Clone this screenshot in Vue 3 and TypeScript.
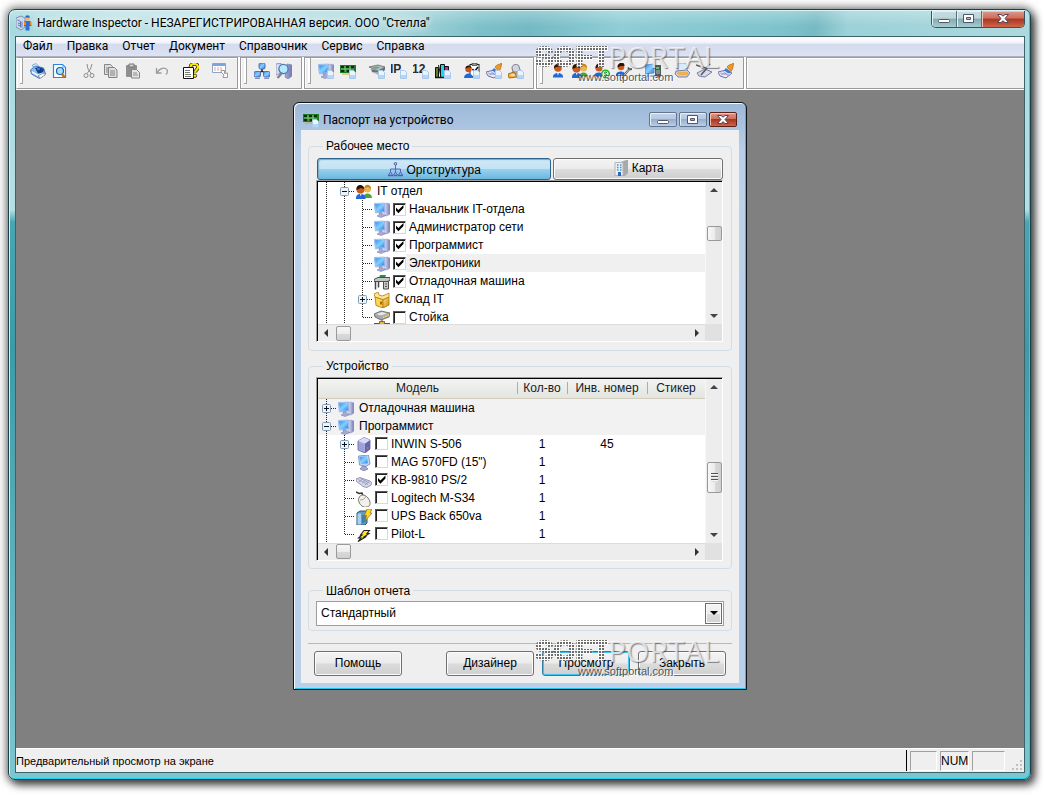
<script setup lang="ts">
import { ref } from 'vue'

interface Tool { icon: string; title: string; page?: boolean }
interface TreeRow { guides: string[]; icon: string; text: string; check?: boolean; hot?: boolean }
interface DeviceRow extends TreeRow { count?: string; inv?: string; group?: boolean }

const menus: string[] = ['Файл', 'Правка', 'Отчет', 'Документ', 'Справочник', 'Сервис', 'Справка']

const bands: Tool[][][] = [
  [
    [{ icon: 'printer', title: 'Печать' }, { icon: 'preview', title: 'Просмотр' }],
    [{ icon: 'cut', title: 'Вырезать' }, { icon: 'copy', title: 'Копировать' }, { icon: 'paste', title: 'Вставить' }],
    [{ icon: 'undo', title: 'Отменить' }],
    [{ icon: 'help', title: 'Помощь' }],
    [{ icon: 'export', title: 'Экспорт' }],
  ],
  [[{ icon: 'network', title: 'Сеть' }, { icon: 'search', title: 'Поиск' }]],
  [
    [{ icon: 'pc', title: 'Рабочее место', page: true }, { icon: 'board', title: 'Паспорт', page: true }],
    [
      { icon: 'drive', title: 'Устройства', page: true },
      { icon: 'ip', title: 'IP-адреса', page: true },
      { icon: 'twelve', title: 'Номера', page: true },
      { icon: 'books', title: 'Каталог', page: true },
    ],
    [
      { icon: 'task', title: 'Заявки', page: true },
      { icon: 'brush', title: 'Обслуживание', page: true },
      { icon: 'supply', title: 'Расходные материалы', page: true },
    ],
  ],
  [
    [
      { icon: 'user', title: 'Сотрудник' },
      { icon: 'users', title: 'Сотрудники' },
      { icon: 'useradd', title: 'Контрагент' },
      { icon: 'userfix', title: 'Ремонт' },
    ],
    [{ icon: 'server', title: 'Компьютер' }],
    [{ icon: 'parcel', title: 'Поставка' }, { icon: 'pen', title: 'Запись' }, { icon: 'brush', title: 'Уборка' }],
  ],
]

const places = ref<TreeRow[]>([
  { guides: ['v', 'minus'], icon: 'users', text: 'IT отдел' },
  { guides: ['v', 'v', 'tee'], icon: 'pc', text: 'Начальник IT-отдела', check: true },
  { guides: ['v', 'v', 'tee'], icon: 'pc', text: 'Администратор сети', check: true },
  { guides: ['v', 'v', 'tee'], icon: 'pc', text: 'Программист', check: true },
  { guides: ['v', 'v', 'tee'], icon: 'pc', text: 'Электроники', check: true, hot: true },
  { guides: ['v', 'v', 'tee'], icon: 'desk', text: 'Отладочная машина', check: true },
  { guides: ['v', 'v', 'plus'], icon: 'box', text: 'Склад IT' },
  { guides: ['v', 'v', 'elbow'], icon: 'rack', text: 'Стойка', check: false },
])

const devices = ref<DeviceRow[]>([
  { guides: ['plus'], icon: 'pc', text: 'Отладочная машина', group: true },
  { guides: ['minus'], icon: 'pc', text: 'Программист', group: true },
  { guides: ['v', 'plus'], icon: 'case', text: 'INWIN S-506', check: false, count: '1', inv: '45' },
  { guides: ['v', 'tee'], icon: 'monitor', text: 'MAG 570FD (15")', check: false, count: '1' },
  { guides: ['v', 'tee'], icon: 'keyboard', text: 'KB-9810 PS/2', check: true, count: '1' },
  { guides: ['v', 'tee'], icon: 'mouse', text: 'Logitech M-S34', check: false, count: '1' },
  { guides: ['v', 'tee'], icon: 'ups', text: 'UPS Back 650va', check: false, count: '1' },
  { guides: ['v', 'elbow'], icon: 'bolt', text: 'Pilot-L', check: false, count: '1' },
])

const template = ref('Стандартный')
const tab = ref('org')
</script>

<template>
  <svg class="sprite" aria-hidden="true">
    <defs>
      <linearGradient id="gBlue" x1="0" y1="0" x2="1" y2="1"><stop offset="0" stop-color="#2f8cf2" /><stop offset=".5" stop-color="#86d0ff" /><stop offset="1" stop-color="#2478e8" /></linearGradient>
      <linearGradient id="gCase" x1="0" y1="0" x2="1" y2="0"><stop offset="0" stop-color="#e8eaf8" /><stop offset="1" stop-color="#7478b4" /></linearGradient>
      <linearGradient id="gGold" x1="0" y1="0" x2="1" y2="1"><stop offset="0" stop-color="#ffe27a" /><stop offset="1" stop-color="#c88a10" /></linearGradient>
      <symbol id="page" viewBox="0 0 16 16"><path d="M9.500 7.500h4l2 2v6h-6z" fill="#eaf4ff" stroke="#a8c8ec" /><path d="M10 12h5v3h-5z" fill="#b5d6f8" /></symbol>
      <symbol id="inspector" viewBox="0 0 16 16">
        <path d="M0 3l5-2 4 2v9l-4 3-5-3z" fill="#cfd8ea" stroke="#7f8fb5" /><path d="M1.500 5l3 1.500v6M6 6.500v6M2 8l2.500 1M2 10l2.500 1" stroke="#5d77b5" fill="none" />
        <circle cx="11.500" cy="3.500" r="2.200" fill="#e8b27c" /><path d="M9 2.500h5L13 .5h-3z" fill="#2b63c0" /><path d="M8.500 6h6l1 5h-2v4.500h-4V11h-1.500z" fill="#2e6fd6" /><path d="M8 7h2v3H8zM14 7h1.500v3H14z" fill="#f08a1c" />
      </symbol>
      <symbol id="printer" viewBox="0 0 16 16">
        <path d="M2 2.500l4-2 3 3-3 2z" fill="#eaf5ff" stroke="#6fa6dc" /><path d="M.5 7l5-4 8 2 2 6-6 4.500L1.500 11z" fill="#8dbcf0" stroke="#4577b4" /><path d="M5 5l4-1 5 2-1 4-5 .5z" fill="#123c8c" /><path d="M7 6l3 0" stroke="#5fb8ff" /><path d="M2 9l6 3.500 5-2.500" stroke="#f4f9ff" fill="none" stroke-width="1.500" /><path d="M8 13l5-3 2.500 1.500-5 3.500z" fill="#fff" stroke="#8a95a4" />
      </symbol>
      <symbol id="preview" viewBox="0 0 16 16">
        <path d="M1.500 1.500h9l3 3v10h-12z" fill="#fff" stroke="#2d83df" stroke-width="1.200" /><path d="M10 2v3h3z" fill="#9cccff" /><circle cx="8" cy="8" r="3.500" fill="#a5e2f8" stroke="#1a63ae" stroke-width="1.200" /><path d="M10 11l2.500 3.500" stroke="#b97622" stroke-width="2.400" />
      </symbol>
      <symbol id="cut" viewBox="0 0 16 16" fill="none" stroke="#8c8c8c"><path d="M6 1l1 5 3.500 5M11 1L9.500 6 6 10.500" /><circle cx="5" cy="12.500" r="2" /><circle cx="11" cy="12.500" r="2" /></symbol>
      <symbol id="copy" viewBox="0 0 16 16" fill="#dedede" stroke="#858585"><path d="M1.500 1.500h6l2 2v8h-8z" /><path d="M3 5h5M3 7h5M3 9h5" /><path d="M5.500 4.500h6l2.500 2.500v7.500H5.500z" /><path d="M7 8h5M7 10h5M7 12h5" /></symbol>
      <symbol id="paste" viewBox="0 0 16 16"><rect x="1" y="2" width="11" height="12" rx="1" fill="#8f8f8f" /><path d="M4 1h5v3H4z" fill="#d0d0d0" stroke="#777" /><path d="M6.500 6.500h5l3 3v5.500h-8z" fill="#e6e6e6" stroke="#858585" /><path d="M8 10h4M8 12h5" stroke="#8c8c8c" /></symbol>
      <symbol id="undo" viewBox="0 0 16 16"><path d="M2.500 5v5h5M3 9.500C5 6 9 4.500 11.500 5.500S14 9.500 12 11.500" fill="none" stroke="#999" stroke-width="1.300" /></symbol>
      <symbol id="help" viewBox="0 0 16 16"><path d="M.5 4.500h10v11H.5z" fill="#fff" stroke="#111" /><path d="M2 7.500h5M2 9.500h5M2 11.500h6M2 13.500h6" stroke="#555" stroke-width=".8" /><path d="M7.500 4c0-4 7.500-4 7.500 0 0 3-3 3-3 5.500" fill="none" stroke="#111" stroke-width="3.600" /><path d="M7.500 4c0-4 7.500-4 7.500 0 0 3-3 3-3 5.500" fill="none" stroke="#ffe800" stroke-width="2.200" /><circle cx="12" cy="12.800" r="1.700" fill="#ffe800" stroke="#111" stroke-width=".7" /></symbol>
      <symbol id="export" viewBox="0 0 16 16"><path d="M.5 .5h13v9H.5z" fill="#fff" stroke="#8fa4c8" /><path d="M1 1h12v2H1z" fill="#7ba4e0" /><path d="M2 5h2m1 0h2m1 0h2M2 7h2m1 0h2m1 0h2" stroke="#e0a19c" /><path d="M9.500 7.500h3v3l3-.5v4.500H11l1-2.500-3-3z" fill="#fff" stroke="#9a9a9a" /></symbol>
      <symbol id="network" viewBox="0 0 16 16"><path d="M8 5v3M8 8l-4 3M8 8l4 3" stroke="#223" stroke-width="1.500" /><rect x="5" y="0" width="6" height="6" rx="1.500" fill="url(#gBlue)" stroke="#5a6da8" /><rect x="0" y="8.500" width="6.500" height="5.500" rx="1.500" fill="url(#gBlue)" stroke="#5a6da8" /><rect x="9.500" y="8.500" width="6.500" height="5.500" rx="1.500" fill="url(#gBlue)" stroke="#5a6da8" /><path d="M1 15.500h5M10 15.500h5" stroke="#8b90b6" /></symbol>
      <symbol id="search" viewBox="0 0 16 16"><path d="M0 1l5-1v10l-5 2zM11 1l5 1v11l-4 3-3-2z" fill="url(#gCase)" stroke="#7f88b0" stroke-width=".8" /><circle cx="7.500" cy="6" r="4.600" fill="#b5e8fd" stroke="#4a7ab8" stroke-width="1.300" /><path d="M5.500 10.500L1.500 15" stroke="#86808e" stroke-width="2.400" /></symbol>
      <symbol id="pc" viewBox="0 0 16 16"><path d="M10 2l3-1 3 1v10l-3 2-3-1z" fill="url(#gCase)" stroke="#9a9dcb" stroke-width=".6" /><path d="M0 1.500L10.500 1l.5 9L1.500 11z" fill="#b4d4f8" stroke="#7fa6de" stroke-width=".6" /><path d="M1 2.300l9-.5.3 7.500L2 10.200z" fill="url(#gBlue)" /><path d="M5 11l3-.4.500 1.900L12 13.500l-5 2-4-1.500 2.500-1.300z" fill="#a7abd4" stroke="#7d80b0" stroke-width=".6" /></symbol>
      <symbol id="board" viewBox="0 0 16 16"><path d="M0 2h16v8H0z" fill="#1d7a28" /><path d="M1 3h3v2H1zM6 3h3v2H6zM11 3h3v3h-3zM1 7h4v2H1zM7 7h3v2H7z" fill="#0b2c10" /><path d="M1 6h13M5 3v6M10 3v6" stroke="#93e07f" stroke-width=".8" /><path d="M2 11h8" stroke="#d0a63c" /></symbol>
      <symbol id="drive" viewBox="0 0 16 16"><path d="M0 4l9-2 7 2-7 4z" fill="#b9bcc6" stroke="#62656f" stroke-width=".8" /><path d="M2 6l7 2 7-4v3l-6 5-7-3z" fill="#6c6f7c" /><path d="M3 4.500l5-1 3 1-4 1.500z" fill="#5fae56" /><path d="M4 10h5" stroke="#e1e2ea" /></symbol>
      <symbol id="ip" viewBox="0 0 16 16"><text x="-1" y="10" font-family="Liberation Sans, sans-serif" font-size="12" font-weight="700" fill="#2b2b2b">IP</text></symbol>
      <symbol id="twelve" viewBox="0 0 16 16"><text x="-1" y="10" font-family="Liberation Sans, sans-serif" font-size="12" font-weight="700" fill="#2b2b2b">12</text></symbol>
      <symbol id="books" viewBox="0 0 16 16"><path d="M.5 4.500h3v10h-3zM3.500 2l2.500 12" fill="#5d7c3c" stroke="#111" /><path d="M5.500 1.500h4v13h-4z" fill="#18d8ec" stroke="#111" /><path d="M9.500 3.500h4v11h-4z" fill="#d021b6" stroke="#111" /><path d="M0 14.500h15" stroke="#111" stroke-width="1.500" /></symbol>
      <symbol id="task" viewBox="0 0 16 16"><rect x="6" y="1.500" width="9" height="12" fill="#fff" stroke="#222" /><path d="M8 0h5v2.500H8z" fill="#999" stroke="#222" stroke-width=".6" /><path d="M8.500 6l2 2.500L14 4" stroke="#111" fill="none" stroke-width="1.500" /><circle cx="4.500" cy="6" r="3.200" fill="#c4571f" /><path d="M1.500 5.500c0-4 6-4 6 0L5.500 4z" fill="#2a1408" /><path d="M0 15c0-6 9-6 9 0z" fill="#2368d8" /></symbol>
      <symbol id="brush" viewBox="0 0 16 16"><path d="M0 9l8-2 6 3-6 5-6-2z" fill="#e8e8fa" stroke="#6e72b0" /><path d="M2 10l9 2M3 12l8-3M5 8.500l5 4" stroke="#8a8fc8" stroke-width=".7" /><path d="M8 5l5 4-2 1.500-5-3z" fill="#3d78c8" /><path d="M9 4c2-3 4-2 7-4-1 3-1 6-3 8.500z" fill="#f09a26" stroke="#b46410" stroke-width=".7" /></symbol>
      <symbol id="supply" viewBox="0 0 16 16"><path d="M4 5c0-5 8-4 7-1l2 5H5z" fill="#d4d6de" stroke="#777a88" /><path d="M4 9h9l2 3H2z" fill="#9ca0b2" /><path d="M0 11l6-2 3 5-8 1z" fill="#f2b14a" stroke="#a66d1a" /><path d="M3 12h4" stroke="#fff" /></symbol>
      <symbol id="user" viewBox="0 0 16 16"><circle cx="8" cy="5" r="3.800" fill="#c95a20" /><path d="M4 5.500C3 0 12-1 12 4L9 3.500 6 4z" fill="#2a1408" /><path d="M3 14.500c-1-6 11-6 10 0z" fill="#2368d8" /><path d="M7 9.500h2l-1 3z" fill="#fff" /></symbol>
      <symbol id="users" viewBox="0 0 16 16"><circle cx="11.500" cy="5" r="3.500" fill="#eeb352" /><path d="M8.500 4c0-5 7-4 6.500 1L12 3z" fill="#c58414" /><path d="M7 14c0-6 9-6 9 0z" fill="#48a63a" /><circle cx="4.500" cy="5.500" r="4" fill="#c95a20" /><path d="M.5 6C-.5-.5 8-.5 8 5L5 4z" fill="#2a1408" /><path d="M0 15c-1-7 10-7 9.500 0z" fill="#2368d8" /><path d="M4 10h1.500l-.7 2.500z" fill="#fff" /></symbol>
      <symbol id="useradd" viewBox="0 0 16 16"><circle cx="5" cy="5" r="3.500" fill="#c95a20" /><path d="M1.500 5.500C1-1 9-1 8.500 4L5 3.500z" fill="#2a1408" /><path d="M0 14c-1-6 10-6 9.500 0z" fill="#2368d8" /><circle cx="11.500" cy="11" r="3.800" fill="#dff5dc" stroke="#19b52b" stroke-width="1.500" /><path d="M13 9.500c-3-1.500-3 1.500-1.500 1.500s2 3-1.500 1.500" stroke="#0c7a18" fill="none" /></symbol>
      <symbol id="userfix" viewBox="0 0 16 16"><circle cx="5" cy="4" r="3.300" fill="#c95a20" /><path d="M1.500 4.500C1-1 9-2 8.500 3L5 3z" fill="#2a1408" /><path d="M0 13c-1-6 10-6 9.500 0z" fill="#2368d8" /><path d="M6 14.500l7-8M12 4.500l1.500 2 2.500-.5M4.500 13l2 .5.5 2" stroke="#555" stroke-width="2" fill="none" /><path d="M6.500 14l6.500-7.500" stroke="#f0f0f0" stroke-width=".8" /></symbol>
      <symbol id="server" viewBox="0 0 16 16"><path d="M0 2l9-1v9l-9 1z" fill="url(#gBlue)" stroke="#5f86c4" stroke-width=".8" /><path d="M2 12h7v2H1z" fill="#a9b4d4" /><path d="M10 2h6v13h-6z" fill="#50575e" /><path d="M11 4h3v2h-3z" fill="#58d060" /><path d="M11 8h4M11 10h4" stroke="#b8bcc4" /></symbol>
      <symbol id="parcel" viewBox="0 0 16 16"><path d="M4 0h7l2 3v6H4z" fill="#d8ecff" stroke="#8aabd2" /><path d="M2 8l11-1 3 3-3 4H4L1 11z" fill="#c9ccda" stroke="#80849c" /><path d="M3 9h11v3H4z" fill="#efb052" /></symbol>
      <symbol id="pen" viewBox="0 0 16 16"><path d="M1 10l8-4 7 3-7 5-6-1z" fill="#d9d9ec" stroke="#777aa6" /><path d="M0 2l6 2 4 1 4-4M5 12l7-8" stroke="#58595e" stroke-width="1.500" fill="none" /></symbol>
      <symbol id="orgchart" viewBox="0 0 16 16" fill="none" stroke="#565ab0"><path d="M7.500 3v4M2.500 10.500V7h10v3.500M7.500 7v3M.5 13l2-3 2 3M5.500 13l2-3 2 3M10.500 13l2-3 2 3" stroke-width=".9" /><circle cx="7.500" cy="1.800" r="1.300" fill="#b9bdf4" /><path d="M0 13.500h5M5.500 13.500h4M10 13.500h5" stroke-width="1.600" /></symbol>
      <symbol id="building" viewBox="0 0 16 16"><path d="M8 2l5-2h2v13l-3 3H8z" fill="#a9a9a9" /><path d="M2 2.500h8v13H2z" fill="#eee" stroke="#b5b5b5" /><path d="M4 5h1.500M7 5h1.500M4 7.500h1.500M7 7.500h1.500M4 10h1.500M7 10h1.500" stroke="#2d9af0" stroke-width="1.500" /><path d="M5 12h3v4H5z" fill="#2a6ab8" /></symbol>
      <symbol id="desk" viewBox="0 0 16 16"><path d="M6 1h6l-1 3H5z" fill="#2b8f3c" /><path d="M0 5.500l4-2h12v3l-3 1H0z" fill="#c6c6c6" stroke="#4d4d4d" /><path d="M1.500 7.500v8M4.500 7.500v6" stroke="#444" stroke-width="1.500" /><path d="M9.500 7.500h5v7.500h-5z" fill="#c9c9c9" stroke="#4d4d4d" /><path d="M11 10h2M11 12.500h2" stroke="#555" /></symbol>
      <symbol id="box" viewBox="0 0 16 16"><path d="M1 5l8 2.500V16l-7-2.500z" fill="#ffd34d" stroke="#a9730e" stroke-width=".8" /><path d="M9 7.500L15 5v8L9 16z" fill="url(#gGold)" stroke="#a9730e" stroke-width=".8" /><path d="M1 5L0 2 4 0l1 3 3 1 3-1 4-2v4L9 7.500z" fill="#ffe592" stroke="#b07c14" stroke-width=".8" /><path d="M7 9.500v3" stroke="#7a4a00" stroke-width="1.500" /></symbol>
      <symbol id="rack" viewBox="0 0 16 16"><path d="M0 4l7-3 9 2-1 4-8 3-6-3z" fill="#a5a8ac" stroke="#5c5f62" stroke-width=".8" /><path d="M2 4l6-2 5 1.500-6 2z" fill="#e6e7e9" /><path d="M9 7.500L15 5" stroke="#ffe02a" stroke-width="1.500" stroke-dasharray="1.500 1" /><path d="M8 10v3M0 13.500h16" stroke="#555" /><path d="M5.500 11.500h5v4h-5z" fill="#f2b12e" stroke="#8d6410" /></symbol>
      <symbol id="case" viewBox="0 0 16 16"><path d="M2 4l6-3.500L14 3v9l-5 4-7-3z" fill="#a6a9dc" stroke="#5a5d98" stroke-width=".8" /><path d="M9 6.500L14 3v9l-5 4z" fill="#6467a8" /><path d="M2 4l7 2.500L14 3 8 .5z" fill="#d9dbf8" /><path d="M3.500 7l4 1.500M3.500 9l4 1.500M3.500 11l4 1.500" stroke="#8c90c8" stroke-width=".7" /><circle cx="11.500" cy="11" r="1" fill="#f06060" /></symbol>
      <symbol id="monitor" viewBox="0 0 16 16"><path d="M2.500 1l10-1 1.500 9-4 2.500L3.500 10z" fill="#b9d6f4" stroke="#6c8dbd" stroke-width=".8" /><path d="M3.500 2l7.500-.7.8 7-7 .7z" fill="url(#gBlue)" /><path d="M6.500 11l3 .5 2.500 2.500-4 2-4-2z" fill="#a4a7cf" stroke="#6b6ea0" stroke-width=".6" /></symbol>
      <symbol id="keyboard" viewBox="0 0 16 16"><path d="M0 6l4-1.500L14 8l2 2-1 2-4 2.500-4-1L0 8z" fill="#d6d8ec" stroke="#7f82a9" stroke-width=".8" /><path d="M2 6.500l10 5M4.500 5.500l9 4.500M3 9l3.500-3M6 10.500l3.500-3M9 12l4-3.500" stroke="#8b8eb8" stroke-width=".7" /></symbol>
      <symbol id="mouse" viewBox="0 0 16 16"><path d="M0 1l3 1.500L6 2l1 3" stroke="#333" fill="none" stroke-width="1.500" /><path d="M3 7c1-4 6-4 9 0s3 8-1 9-7-2-8-5-.5-3 0-4z" fill="#f1f0ea" stroke="#77736c" /><path d="M4 9c3 0 5-1 6-4" stroke="#aaa59c" fill="none" /></symbol>
      <symbol id="ups" viewBox="0 0 16 16"><path d="M1 4l3-2h7v12l-2 2H1z" fill="#5f9ac4" stroke="#26587c" /><path d="M1.500 4.500H5v11H1.500z" fill="#a8d2ec" /><path d="M7 6v8M9 6v7" stroke="#2e6288" /><path d="M11 0h5l-2 4h2l-7 8 1.500-5.500H8.500z" fill="#ffd91a" stroke="#a5740a" stroke-width=".8" /></symbol>
      <symbol id="bolt" viewBox="0 0 16 16"><path d="M8 3.500h5.500l-2.500 3h2L8 10h1.500L2 14.500 5 11H2.500L6 8H4.500z" fill="#ffe81c" stroke="#222" stroke-width="1.100" /></symbol>
      <symbol id="g-v" viewBox="0 0 18 18"><path d="M8.500 0v18" stroke="#222" stroke-dasharray="1 1" /></symbol>
      <symbol id="g-tee" viewBox="0 0 18 18" fill="none" stroke="#222" stroke-dasharray="1 1"><path d="M8.500 0v18M9 9.500h9" /></symbol>
      <symbol id="g-elbow" viewBox="0 0 18 18" fill="none" stroke="#222" stroke-dasharray="1 1"><path d="M8.500 0v10M9 9.500h9" /></symbol>
      <symbol id="g-minus" viewBox="0 0 18 18"><path d="M8.500 0v18M13 9.500h5" stroke="#222" stroke-dasharray="1 1" /><rect x="4.500" y="5.500" width="8" height="8" rx="1" fill="#eef3fa" stroke="#7f9db9" /><path d="M6 9.500h5" stroke="#111" /></symbol>
      <symbol id="g-plus" viewBox="0 0 18 18"><path d="M8.500 0v18M13 9.500h5" stroke="#222" stroke-dasharray="1 1" /><rect x="4.500" y="5.500" width="8" height="8" rx="1" fill="#eef3fa" stroke="#7f9db9" /><path d="M6 9.500h5M8.500 7v5" stroke="#111" /></symbol>
      <symbol id="c-min" viewBox="0 0 16 12"><rect x="2.500" y="6.500" width="11" height="3" rx="1" fill="#fff" stroke="#51566b" /></symbol>
      <symbol id="c-max" viewBox="0 0 16 12"><path d="M2.500 1.500h10v8h-10zM5.500 4.500h4v2h-4z" fill="#fff" fill-rule="evenodd" stroke="#51566b" /></symbol>
      <symbol id="c-close" viewBox="0 0 16 12"><path d="M2.500 1.500H6L8 3.200l2-1.700h3.500L10 5.500l3.500 4H10L8 7.800 6 9.500H2.500l3.500-4z" fill="#fff" stroke="#51465b" /></symbol>
    </defs>
  </svg>

  <div class="screen">
    <div class="window">
      <header class="titlebar">
        <svg class="icon"><use href="#inspector" /></svg>
        <h1 class="title">Hardware Inspector - НЕЗАРЕГИСТРИРОВАННАЯ версия. ООО "Стелла"</h1>
        <div class="caption">
          <button type="button" class="cap" aria-label="Свернуть"><svg><use href="#c-min" /></svg></button>
          <button type="button" class="cap" aria-label="Развернуть"><svg><use href="#c-max" /></svg></button>
          <button type="button" class="cap close" aria-label="Закрыть окно"><svg><use href="#c-close" /></svg></button>
        </div>
      </header>

      <div class="client">
        <nav class="menu">
          <button v-for="m in menus" :key="m" type="button" class="menuitem">{{ m }}</button>
        </nav>
        <div class="toolbars">
          <div v-for="(band, bi) in bands" :key="bi" class="band">
            <span class="grip"></span>
            <div v-for="(group, gi) in band" :key="gi" class="toolgroup">
              <button v-for="t in group" :key="t.icon" type="button" class="tool" :aria-label="t.title">
                <svg class="icon"><use :href="'#' + t.icon" /><use v-if="t.page" href="#page" /></svg>
              </button>
            </div>
          </div>
          <div class="band rest"></div>
          <div class="watermark top" aria-hidden="true">
            <div class="brand"><span class="dots">SOFT</span><span class="portal">PORTAL</span></div>
            <div class="url">www.softportal.com</div>
          </div>
        </div>

        <main class="desktop">
          <section class="dialog" aria-labelledby="dlg">
            <header class="dlgbar">
              <svg class="icon"><use href="#board" /><use href="#page" /></svg>
              <h2 id="dlg" class="title">Паспорт на устройство</h2>
              <div class="dlgcaption">
                <button type="button" class="cap" aria-label="Свернуть"><svg><use href="#c-min" /></svg></button>
                <button type="button" class="cap" aria-label="Развернуть"><svg><use href="#c-max" /></svg></button>
                <button type="button" class="cap close" aria-label="Закрыть окно"><svg><use href="#c-close" /></svg></button>
              </div>
            </header>

            <form class="body" @submit.prevent>
              <fieldset class="group">
                <legend>Рабочее место</legend>
                <div class="tabs">
                  <button type="button" class="tab" :class="{ on: tab === 'org' }" @click="tab = 'org'"><svg class="icon"><use href="#orgchart" /></svg>Оргструктура</button>
                  <button type="button" class="tab" :class="{ on: tab === 'map' }" @click="tab = 'map'"><svg class="icon"><use href="#building" /></svg>Карта</button>
                </div>
                <div class="listbox">
                  <ul class="tree">
                    <li v-for="r in places" :key="r.text" class="row">
                      <svg v-for="(g, i) in r.guides" :key="i" class="guide"><use :href="'#g-' + g" /></svg>
                      <svg class="icon node"><use :href="'#' + r.icon" /></svg>
                      <label v-if="r.check !== undefined" class="item" :class="{ hot: r.hot }"><input v-model="r.check" type="checkbox" class="check" /><span class="txt">{{ r.text }}</span></label>
                      <span v-else class="item plain">{{ r.text }}</span>
                    </li>
                  </ul>
                  <div class="vbar"><i class="up"></i><i class="thumb high"></i><i class="down"></i></div>
                  <div class="hbar"><i class="left"></i><i class="thumb"></i><i class="right"></i></div>
                  <div class="corner"></div>
                </div>
              </fieldset>

              <fieldset class="group second">
                <legend>Устройство</legend>
                <div class="listbox">
                  <table class="grid">
                    <colgroup><col /><col class="c-count" /><col class="c-inv" /><col class="c-sticker" /></colgroup>
                    <thead><tr><th>Модель</th><th>Кол-во</th><th>Инв. номер</th><th>Стикер</th></tr></thead>
                    <tbody>
                      <tr v-for="d in devices" :key="d.text" :class="{ shaded: d.group }">
                        <td>
                          <div class="row">
                            <svg v-for="(g, i) in d.guides" :key="i" class="guide"><use :href="'#g-' + g" /></svg>
                            <svg class="icon node"><use :href="'#' + d.icon" /></svg>
                            <label v-if="d.check !== undefined" class="item"><input v-model="d.check" type="checkbox" class="check" /><span class="txt">{{ d.text }}</span></label>
                            <span v-else class="item plain">{{ d.text }}</span>
                          </div>
                        </td>
                        <td>{{ d.count }}</td>
                        <td>{{ d.inv }}</td>
                        <td></td>
                      </tr>
                    </tbody>
                  </table>
                  <div class="vbar"><i class="up"></i><i class="thumb low"></i><i class="down"></i></div>
                  <div class="hbar"><i class="left"></i><i class="thumb"></i><i class="right"></i></div>
                  <div class="corner"></div>
                </div>
              </fieldset>

              <fieldset class="group third">
                <legend><label for="tpl">Шаблон отчета</label></legend>
                <div class="combo">
                  <select id="tpl" v-model="template"><option>Стандартный</option></select>
                  <span class="drop"></span>
                </div>
              </fieldset>

              <div class="actions">
                <button type="button" class="btn first">Помощь</button>
                <button type="button" class="btn">Дизайнер</button>
                <button type="submit" class="btn default">Просмотр</button>
                <button type="button" class="btn">Закрыть</button>
                <div class="watermark bottom" aria-hidden="true">
                  <div class="brand"><span class="dots">SOFT</span><span class="portal">PORTAL</span></div>
                  <div class="url">www.softportal.com</div>
                </div>
              </div>
            </form>
          </section>
        </main>

        <footer class="status">
          <span class="hint">Предварительный просмотр на экране</span>
          <span class="panel p1"></span>
          <span class="panel p2">NUM</span>
          <span class="panel p3"></span>
          <svg class="sizer" viewBox="0 0 12 12"><path d="M9 1h2v2H9zM5 5h2v2H5zM9 5h2v2H9zM1 9h2v2H1zM5 9h2v2H5zM9 9h2v2H9z" fill="#c0c0c0" /></svg>
        </footer>
      </div>
    </div>
  </div>
</template>

<style>
body { margin: 0; background: #fff; }
</style>

<style scoped>
* { box-sizing: border-box; }
button, select, input { font: inherit; color: inherit; margin: 0; }
.sprite { position: absolute; width: 0; height: 0; }
.icon { width: 16px; height: 16px; flex: none; display: block; }

.screen {
  display: flex;
  min-height: 100vh;
  padding: 9px 13px 16px 8px;
  overflow: hidden;
  font: 12px/16px "Liberation Sans", Arial, sans-serif;
  color: #000;
  background: #fff;
}
.window {
  flex: 1;
  min-width: 0;
  display: flex;
  flex-direction: column;
  padding: 0 5px 6px 6px;
  border: 1px solid #1d4148;
  border-radius: 7px;
  background: linear-gradient(#a9dbe0 0, #b5dfe3 200px, #4aa5b1 212px, #3d9ba8 340px, #6cbac5 650px, #7cc6cf 100%);
  box-shadow: inset 1px 1px 0 #d8f4f7, inset -1px -1px 0 #19d2f5, 0 0 8px 2px rgba(0, 0, 0, .5), 4px 5px 9px rgba(0, 0, 0, .6);
}
.titlebar {
  display: flex;
  align-items: flex-start;
  height: 25px;
  margin: 1px -4px 0 -5px;
  padding-left: 6px;
  border-radius: 6px 6px 0 0;
  background:
    linear-gradient(rgba(255, 255, 255, .28), rgba(255, 255, 255, 0) 60%),
    linear-gradient(100deg, #a6d9de 0, #bce2e5 12%, #a8d7dc 38%, #7fc1ca 46%, #74bac4 51%, #90cdd6 60%, #7ec3cc 76%, #77bac3 79%, #9bd1d8 82%, #add9de 100%);
}
.titlebar .icon { margin: 4px 5px 0 0; }
.title {
  flex: 1;
  min-width: 0;
  margin: 0;
  font: 12px/26px Roboto, "Noto Sans", sans-serif;
  white-space: nowrap;
}
.titlebar .title { text-shadow: 0 0 8px #fff, 0 0 8px #fff; line-height: 25px; }
.caption {
  display: flex;
  height: 17px;
  margin-right: 4px;
  border: 1px solid #39525b;
  border-top: 0;
  border-radius: 0 0 5px 5px;
  overflow: hidden;
}
.cap {
  display: grid;
  place-items: center;
  width: 25px;
  padding: 0;
  border: 0;
  border-right: 1px solid #55717a;
  background: linear-gradient(#c9dde0 0, #bed4d8 45%, #86aab1 50%, #a3ccd1 100%);
  box-shadow: inset 1px 1px 0 #e4f2f4;
}
.cap svg { width: 16px; height: 12px; }
.caption .close { width: 42px; border-right: 0; }
.cap.close { background: linear-gradient(#dd9a8c 0, #cd6d59 45%, #ab3520 50%, #cf6647 100%); box-shadow: inset 1px 1px 0 #f0c4ba; }

.client {
  flex: 1;
  display: flex;
  flex-direction: column;
  border: 1px solid #3b636b;
  background: #efefef;
}
.menu {
  display: flex;
  height: 20px;
  border-bottom: 1px solid #aeb2bd;
  background: linear-gradient(#fff 0, #f0f3fa 30%, #d4dbed 40%, #dde3f3 100%);
}
.menuitem {
  padding: 0 7px;
  border: 0;
  background: none;
  font: 12px/19px Roboto, "Noto Sans", sans-serif;
}
.toolbars { position: relative; display: flex; gap: 2px; height: 33px; padding-bottom: 1px; background: #fff; }
.band {
  display: flex;
  align-items: center;
  gap: 7px;
  padding: 0 6px 4px 3px;
  border: 1px solid #9a9a9a;
  background: #efefef;
  box-shadow: inset 1px 1px 0 #fff;
}
.band:first-child { border-left-color: #efefef; }
.rest { flex: 1; border-right: 0; }
.grip { width: 3px; height: 26px; margin-right: -3px; border: solid #a0a0a0; border-width: 0 1px 1px 0; background: #fff; }
.toolgroup { display: flex; }
.tool { display: grid; place-items: center; width: 22px; height: 22px; padding: 0; border: 0; background: none; }

.desktop { position: relative; flex: 1; min-height: 600px; background: #808080; }
.dialog {
  position: absolute;
  left: 277px;
  top: 12px;
  width: 454px;
  padding: 0 7px 6px;
  border: 1px solid #101418;
  border-radius: 6px 6px 0 0;
  background: linear-gradient(#9db9d8 0, #b9cfe9 50px, #bcd2eb 100px, #b9d0ea 220px, #b9d0ea 100%);
  box-shadow: inset 1px 1px 0 #f4f9ff, inset -1px -1px 0 #1fc4ea;
}
.dlgbar { display: flex; align-items: center; height: 27px; padding: 6px 0 0 2px; }
.dlgbar .title { line-height: 20px; margin-left: 4px; }
.dlgcaption { display: flex; gap: 2px; margin-right: 2px; }
.dlgcaption .cap { width: 28px; height: 15px; border: 1px solid #66758f; border-radius: 2px; background: linear-gradient(#c4d4e8 0, #b6c9e1 45%, #96afd0 50%, #b8cee8 100%); }
.dlgcaption .cap.close { border-color: #5c2018; background: linear-gradient(#dd9a8c 0, #cd6d59 45%, #ab3520 50%, #cf6647 100%); }
.body { padding: 8px 7px 7px; background: #efefef; }

.group {
  min-width: 0;
  margin: 0;
  padding: 4px 8px 8px 7px;
  border: 1px solid #d3dde6;
  border-radius: 4px;
}
.group legend { margin-left: 7px; padding: 0 3px; line-height: 16px; }
.second { margin-top: 7px; padding-top: 3px; padding-bottom: 7px; }
.third { margin-top: 14px; padding: 2px 7px 4px; }

.tabs { display: grid; grid-template-columns: 235fr 170fr; gap: 2px; margin-left: 1px; }
.tab {
  display: flex;
  align-items: center;
  justify-content: center;
  gap: 3px;
  height: 22px;
  padding: 0 0 2px;
  border: 1px solid #707070;
  border-radius: 3px;
  background: linear-gradient(#f3f3f3 0, #ebebeb 50%, #dcdcdc 52%, #cfcfcf 100%);
  box-shadow: inset 0 0 0 1px #fbfbfb;
}
.tab.on {
  padding: 2px 0 0;
  border-color: #2c628b;
  background: linear-gradient(#cfe8f7 0, #c3e3f5 48%, #98d1ef 52%, #6db6dd 100%);
  box-shadow: inset 1px 1px 1px #7fa9c4;
}

.listbox {
  display: grid;
  grid-template-columns: minmax(0, 1fr) 17px;
  grid-template-rows: auto 17px;
  border: solid;
  border-width: 1px;
  border-color: #a0a0a0 #fff #fff #a0a0a0;
  background: #fff;
  box-shadow: inset 1px 1px 0 #000;
  padding: 1px 0 0 1px;
}
.tree { height: 142px; margin: 0; padding: 0; list-style: none; overflow: hidden; }
.row { display: flex; height: 18px; }
.guide { width: 18px; height: 18px; flex: none; }
.node { margin: 2px 0 0 2px; }
.item { display: flex; align-items: center; flex: 1; white-space: nowrap; line-height: 18px; }
.plain { padding-left: 5px; }
.txt { flex: 1; padding-left: 3px; }
.hot .txt { background: #f0f0f0; }
.check {
  appearance: none;
  width: 13px;
  height: 13px;
  margin-left: 3px;
  flex: none;
  border: 1px solid;
  border-color: #555 #d8d8d8 #d8d8d8 #555;
  background: #fff;
  box-shadow: inset 1px 1px 0 #222;
}
.check:checked::before {
  content: "";
  display: block;
  width: 11px;
  height: 11px;
  background: #000;
  clip-path: polygon(18% 36%, 40% 58%, 86% 14%, 86% 42%, 40% 88%, 18% 64%);
}

.grid { width: 100%; table-layout: fixed; border-collapse: collapse; }
.c-count { width: 50px; }
.c-inv { width: 80px; }
.c-sticker { width: 58px; }
.grid th {
  height: 19px;
  padding: 0;
  font-weight: 400;
  color: #14212b;
  border-bottom: 1px solid #d3cdbd;
  background: linear-gradient(90deg, #a9adae, #a9adae) left center / 1px 12px no-repeat, linear-gradient(#f3f4f1, #e3e5e0);
}
.grid th:first-child { background: linear-gradient(#f3f4f1, #e3e5e0); }
.grid td { height: 18px; padding: 0; line-height: 18px; text-align: center; }
.grid td .row { text-align: left; }
.shaded { background: #f2f2f2; }

.vbar, .hbar { display: flex; align-items: center; justify-content: space-between; background: #ededed; }
.vbar { flex-direction: column; padding: 6px 0; border-left: 1px solid #f8f8f8; }
.hbar { padding: 0 6px; border-top: 1px solid #dcdcdc; }
.corner { background: #e1e1e1; }
.up, .down, .left, .right { width: 0; height: 0; border: 4px solid transparent; }
.up { border-top: 0; border-bottom-color: #444; }
.down { border-bottom: 0; border-top-color: #444; }
.left { border-left: 0; border-right-color: #333; }
.right { border-right: 0; border-left-color: #333; }
.thumb {
  width: 15px;
  height: 15px;
  border: 1px solid #999;
  border-radius: 2px;
  background: linear-gradient(#f7f7f7 0, #ececec 50%, #dadada 52%, #d0d0d0 100%);
}
.hbar .thumb { margin: 0 auto 0 8px; }
.vbar .thumb { background: linear-gradient(90deg, #f7f7f7 0, #ececec 50%, #dadada 52%, #d0d0d0 100%); }
.high { margin: 34px 0 auto; }
.low { margin: auto 0 40px; display: grid; place-items: center; }
.vbar .low { height: 31px; }
.low::before { content: ""; width: 7px; height: 9px; background: repeating-linear-gradient(#555 0 1px, #f5f5f5 1px 2px, #ddd 2px 3px); }

.combo { position: relative; }
.combo select {
  display: block;
  appearance: none;
  width: 100%;
  height: 25px;
  padding: 0 4px;
  border: 1px solid #9d9d9d;
  border-radius: 0;
  background: #fff;
}
.drop {
  position: absolute;
  right: 2px;
  top: 2px;
  width: 17px;
  height: 21px;
  display: grid;
  place-items: center;
  border: 1px solid #6c6c6c;
  background: linear-gradient(#f4f4f4 0, #ececec 50%, #dcdcdc 52%, #d2d2d2 100%);
  box-shadow: inset 0 0 0 1px #fafafa;
  pointer-events: none;
}
.drop::before { content: ""; border: 4px solid transparent; border-top-color: #000; border-bottom: 0; }

.actions { position: relative; display: flex; gap: 8px; margin-top: 12px; padding: 7px 6px 0; border-top: 1px solid #b8b8b8; }
.btn {
  width: 88px;
  height: 25px;
  padding: 0;
  border: 1px solid #707070;
  border-radius: 3px;
  background: linear-gradient(#f4f4f4 0, #ebebeb 48%, #dcdcdc 52%, #cfcfcf 100%);
  box-shadow: inset 0 0 0 1px #fbfbfb;
}
.first { margin-right: auto; }
.default { border-color: #2c7fa8; box-shadow: inset 0 0 0 1px #3fc3f0; }

.watermark { position: absolute; width: 186px; pointer-events: none; }
.watermark.top { left: 519px; top: -15px; }
.watermark.bottom { left: 227px; top: -8px; }
.brand { display: flex; align-items: center; height: 29px; }
.dots {
  width: 73px;
  font: 700 28px/29px "Liberation Sans", Arial, sans-serif;
  color: transparent;
  -webkit-text-stroke: 2px transparent;
  background: conic-gradient(at 1px 2px, #6c6c6c 90deg, rgba(255, 255, 255, .9) 90deg) 0 0 / 3px 3px;
  background-clip: text;
}
.portal { font: 30px/29px "Open Sans", sans-serif; color: rgba(250, 250, 252, .75); text-shadow: 1px 1px 1px rgba(60, 60, 70, .6); }
.url { padding-left: 43px; font: 11px/12px "Liberation Sans", Arial, sans-serif; color: #555; text-shadow: 1px 1px 0 #fff; }

.status { display: flex; align-items: center; gap: 3px; height: 24px; padding: 1px 1px 1px 0; border-top: 1px solid #fff; background: #efefef; }
.hint { flex: 1; align-self: stretch; padding: 3px 0 0; border-right: 1px solid #000; font-size: 11px; white-space: nowrap; }
.panel { height: 20px; border: 1px solid; border-color: #a0a0a0 #fff #fff #a0a0a0; line-height: 18px; text-align: center; }
.p1 { width: 27px; }
.p2 { width: 29px; }
.p3 { width: 33px; }
.sizer { width: 12px; height: 12px; margin-left: 3px; align-self: flex-end; }
</style>
